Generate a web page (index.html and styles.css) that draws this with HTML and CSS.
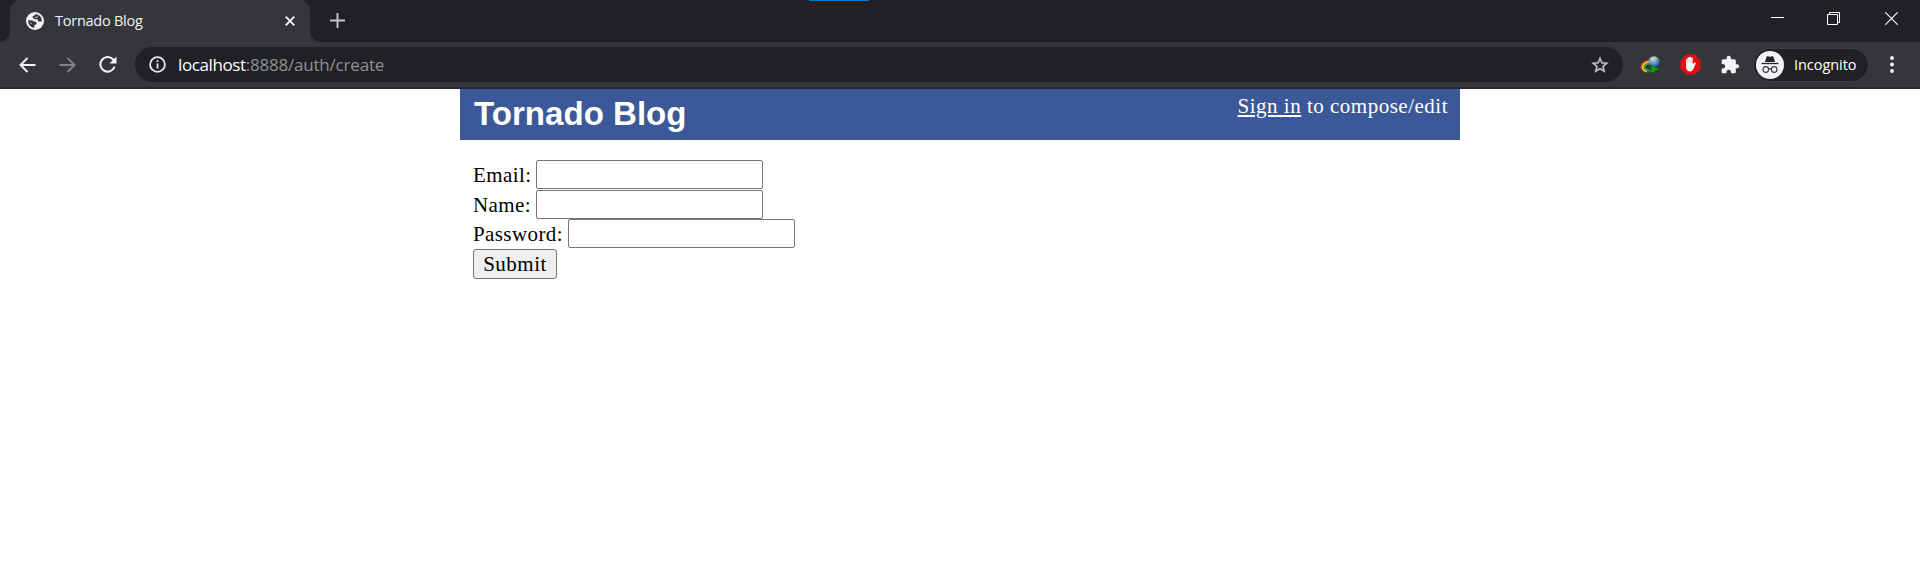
FILE: index.html
```
<!DOCTYPE html>
<html lang="en">
<head>
<meta charset="utf-8">
<title>Tornado Blog</title>
<link rel="stylesheet" href="styles.css">
</head>
<body>
<div class="tabstrip">
  <div class="tab">
    <svg class="favicon" width="18" height="18" viewBox="0 0 18 18"><circle cx="9" cy="9" r="9" fill="#f1f3f4"/><path d="M10.300 2L8.300 3.600 6.600 4.200 7 6 8.800 7.200 11.500 7.200 12.300 9.400 15.800 9.600Q16.300 4.300 10.300 2ZM2 8.300L6.500 8.500 8.300 9.500 10.200 10 10.700 12 8.600 13 8 15.900Q2.200 14.800 2 8.300Z" fill="#35363a"/><path d="M8.800 5.300L11 5.500 11.500 3.700M4.300 10.400L6 12.200" fill="none" stroke="#f1f3f4" stroke-width=".7"/></svg>
    <span class="tab-title">Tornado Blog</span>
    <svg class="tab-close" width="10" height="10" viewBox="0 0 10 10"><path d="M.7.7l8.6 8.6M9.3.7L.7 9.3" stroke="#f1f3f4" stroke-width="1.9"/></svg>
  </div>
  <svg class="new-tab" width="15" height="15" viewBox="0 0 15 15"><path d="M7.5 0v15M0 7.5h15" stroke="#c4c7ca" stroke-width="1.9"/></svg>
  <div class="top-mark"></div>
  <div class="window-controls">
    <svg width="13" height="13" viewBox="0 0 13 13"><path d="M0 5.5h13" stroke="#fff"/></svg>
    <svg width="13" height="13" viewBox="0 0 13 13" fill="none" stroke="#fff"><path d="M.5 2.5h10v10H.5zM2.5 2.5v-2h10v10h-2"/></svg>
    <svg class="window-close" width="13" height="13" viewBox="0 0 13 13"><path d="M.3.3l12.4 12.4M12.7.3L.3 12.7" stroke="#fff" stroke-width="1.1"/></svg>
  </div>
</div>
<div class="toolbar">
  <div class="nav">
    <svg width="17" height="16" viewBox="0 0 17 16" fill="none" stroke="#f1f3f4" stroke-width="1.9"><path d="M16.5 8H1.7M8.5 1L1.5 8l7 7"/></svg>
    <svg width="17" height="16" viewBox="0 0 17 16" fill="none" stroke="#7f8184" stroke-width="1.9"><path d="M.5 8h14.8M8.5 1l7 7-7 7"/></svg>
    <svg width="18" height="17" viewBox="0 0 18 17"><path d="M15.6 10.7A7.3 7.3 0 1 1 14 3.3L15 4.5" fill="none" stroke="#f1f3f4" stroke-width="2"/><path d="M17.5.6v7h-7z" fill="#f1f3f4"/></svg>
  </div>
  <div class="omnibox">
    <svg width="17" height="17" viewBox="0 0 17 17"><circle cx="8.5" cy="8.5" r="7.4" fill="none" stroke="#e8eaed" stroke-width="1.8"/><path d="M8.5 4.2v1.9M8.5 7.4v5.2" stroke="#e8eaed" stroke-width="1.8"/></svg>
    <span class="url"><span class="host">localhost</span><span class="path">:8888/auth/create</span></span>
    <svg class="star" width="20" height="20" viewBox="0 0 24 24"><path d="M22 9.24l-7.19-.62L12 2 9.19 8.63 2 9.24l5.46 4.73L5.82 21 12 17.27 18.18 21l-1.63-7.03L22 9.24zM12 15.4l-3.76 2.27 1-4.28-3.32-2.88 4.38-.38L12 6.1l1.71 4.04 4.38.38-3.32 2.88 1 4.28L12 15.4z" fill="#c4c6c9" stroke="#c4c6c9" stroke-width=".4"/></svg>
  </div>
  <svg class="ext-globe" width="21" height="20" viewBox="0 0 21 20">
    <defs><radialGradient id="ball" cx=".42" cy=".25" r=".75"><stop offset="0" stop-color="#e9f2c6"/><stop offset=".4" stop-color="#7aa7d8"/><stop offset="1" stop-color="#1a4ca5"/></radialGradient></defs>
    <circle cx="14" cy="6.8" r="5.600" fill="url(#ball)"/>
    <path d="M14 1.500q3.500.4 2.500 2.500t-3 2.200q-1-3 .5-4.700z" fill="#bccc68"/>
    <g fill="none" stroke-width="1.600"><path d="M9 5.600C3.500 6.500 1 9.800 1.500 12.500q1.500 4 6 4.500" stroke="#e65332"/><path d="M9 7C4.500 7.800 2.500 10.500 3 13.500q1 2.500 4 3" stroke="#f4dc25"/><path d="M9 8.400C6.300 8.900 4.200 10.800 4.800 13q1.200 2.500 5 2.400" stroke="#35a547"/></g>
    <path d="M9.500 9.800l10.700 4.600-5.100 1.100-1.600 3-1.400-1.500-5.300.4 4.500-3z" fill="#149b12" stroke="#075b10" stroke-width=".6"/>
  </svg>
  <svg class="ext-block" width="21" height="21" viewBox="0 0 21 21"><path d="M6.3.5h8.400l5.800 5.800v8.400l-5.800 5.800H6.300L.5 14.700V6.300z" fill="#e40d12"/><path d="M6 10.700V5.700q.8-1.200 1.500 0V4q.9-1.300 1.700 0v-.8q.9-1.100 1.800 0V4q.9-1.200 1.700 0v6.500l1.400-1.700q1.200-.8 1.800.3l-2.200 5.200Q12.500 17.400 10 17.400 6 17 6 13z" fill="#fff"/><path d="M7.600 5.500v4M9.300 4.300v5M11.100 4.300v5" stroke="#ee7779" stroke-width=".45"/></svg>
  <svg class="ext-puzzle" width="20" height="20" viewBox="0 0 24 24"><path d="M20.500 11H19V7c0-1.100-.9-2-2-2h-4V3.500C13 2.120 11.880 1 10.500 1S8 2.120 8 3.500V5H4c-1.100 0-1.990.9-1.990 2v3.800H3.500c1.490 0 2.700 1.210 2.700 2.700s-1.210 2.700-2.700 2.700H2V20c0 1.100.9 2 2 2h3.800v-1.500c0-1.490 1.210-2.700 2.700-2.700 1.490 0 2.700 1.210 2.700 2.700V22H17c1.100 0 2-.9 2-2v-4h1.500c1.380 0 2.500-1.120 2.500-2.500S21.880 11 20.500 11z" fill="#f1f3f4"/></svg>
  <div class="profile">
    <svg width="28" height="28" viewBox="0 0 28 28"><circle cx="14" cy="14" r="14" fill="#f1f3f4"/><path d="M9 11l1.500-5.200q.3-.8 1.200-.5l2.300.5 2.300-.5q.9-.3 1.200.5L19 11z" fill="#25262a"/><path d="M5.500 12.500h17" stroke="#25262a" stroke-width="1.300"/><g fill="none" stroke="#3c3e42" stroke-width="1.200"><circle cx="9.800" cy="18.500" r="2.800"/><circle cx="18.200" cy="18.500" r="2.800"/><path d="M12.600 18.200q1.400-1 2.800 0"/></g></svg>
    <span>Incognito</span>
  </div>
  <svg class="menu" width="4" height="17" viewBox="0 0 4 17" fill="#f1f3f4"><circle cx="2" cy="2" r="1.900"/><circle cx="2" cy="8.500" r="1.900"/><circle cx="2" cy="15" r="1.900"/></svg>
</div>
<div class="page">
  <header class="header">
    <h1>Tornado Blog</h1>
    <div class="account"><a href="#">Sign in</a> to compose/edit</div>
  </header>
  <form class="form">
    <label class="row"><span class="label email">Email:</span><input type="text"></label>
    <label class="row"><span class="label name">Name:</span><input type="text"></label>
    <label class="row"><span class="label password">Password:</span><input type="password"></label>
    <button type="button"><span>Submit</span></button>
  </form>
</div>
</body>
</html>
```
FILE: styles.css
```
* { box-sizing: border-box; }
body { margin: 0; background: #fff; overflow: hidden; height: 575px; }
svg { display: block; flex: none; }
span, h1, .account { white-space: nowrap; }
.tabstrip { display: flex; height: 42px; background: #202124; padding-left: 10px; position: relative; font-family: "Open Sans", sans-serif; }
.tab { position: relative; width: 300px; background: #35363a; border-radius: 10px 10px 0 0; display: flex; align-items: center; padding: 0 15px 0 16px; color: #f1f3f4; }
.tab::before, .tab::after { content: ""; position: absolute; bottom: 0; width: 10px; height: 10px; }
.tab::before { left: -10px; background: radial-gradient(circle at 0 0, transparent 9.5px, #35363a 10px); }
.tab::after { right: -10px; background: radial-gradient(circle at 100% 0, transparent 9.5px, #35363a 10px); }
.tab-title { margin-left: 11px; font-size: 14.5px; line-height: 20px; letter-spacing: -.25px; }
.tab-close { margin-left: auto; }
.new-tab { margin: 13px 0 0 20px; }
.top-mark { position: absolute; left: 809px; top: 0; width: 60px; height: 1px; background: #0078d7; }
.window-controls { display: flex; gap: 43px; margin: 12px 22px 0 auto; }
.window-close { margin-left: 2px; }
.toolbar { display: flex; align-items: center; height: 47px; background: #35363a; border-bottom: 2px solid #28292c; font-family: "Open Sans", sans-serif; }
.nav { display: flex; align-items: center; gap: 23px; width: 135px; padding-left: 19px; }
.omnibox { display: flex; align-items: center; width: 1488px; height: 35px; border-radius: 18px; background: #202124; padding: 0 13px 0 14px; }
.url { margin-left: 12px; font-size: 17px; line-height: 24px; color: #8f9194; }
.host { color: #fff; letter-spacing: -.4px; }
.path { letter-spacing: -.2px; }
.star { margin-left: auto; }
.ext-globe { margin-left: 17px; }
.ext-block { margin-left: 19px; }
.ext-puzzle { margin-left: 19px; }
.profile { display: flex; align-items: center; width: 116px; height: 34px; margin-left: 13px; padding-left: 2px; border: 1px solid #3d3e42; border-radius: 17px; background: #202124; color: #fff; font-size: 14.5px; }
.profile span { margin-left: 10px; letter-spacing: -.05px; }
.menu { margin-left: 21px; }
.page { width: 1000px; margin: 0 auto; font-family: "Liberation Serif", serif; font-size: 21px; color: #000; }
.header { display: flex; justify-content: space-between; height: 51px; padding: 6px 12px 0 14px; background: #3b5998; color: #fff; }
h1 { margin: 0; font: bold 33.1px/38px "Liberation Sans", sans-serif; }
.account { line-height: 23px; letter-spacing: .5px; }
.account a { color: #fff; }
.form { padding: 20px 13px 0; }
.row { display: flex; align-items: center; height: 29.5px; }
.label { width: 63px; padding-top: 2px; letter-spacing: .4px; }
.password { width: 95px; }
input { width: 227px; height: 29px; border: 1px solid #767676; border-radius: 2px; background: #fff; margin: 0; }
button { display: block; width: 84px; height: 30px; padding: 0; border: 1px solid #767676; border-radius: 3px; background: #efefef; font: 21px/26px "Liberation Serif", serif; color: #000; letter-spacing: .5px; }
```
